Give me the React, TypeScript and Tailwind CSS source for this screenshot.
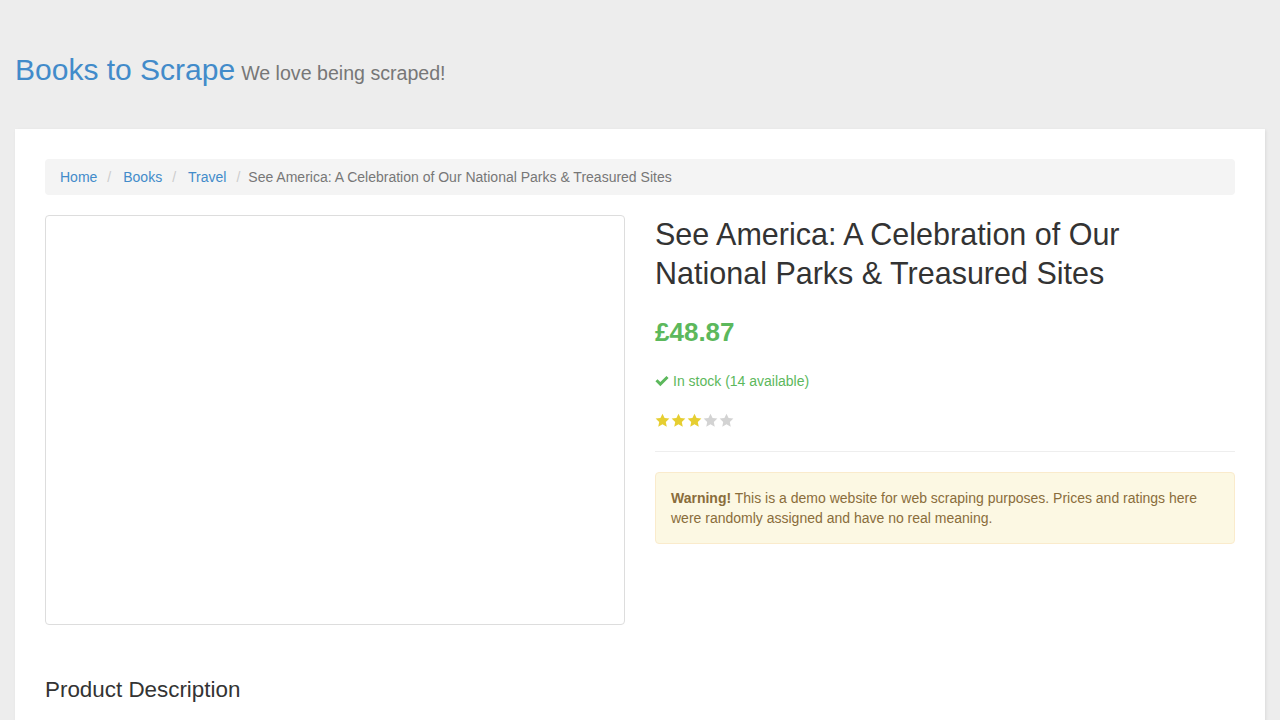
function Star({ on }: { on: boolean }) {
  return (
    <svg viewBox="0 0 24 24" className={`w-[15px] h-[15px] mr-[1px] ${on ? "fill-[#e6ce31]" : "fill-[#d3d3d3]"}`}>
      <path d="M12 1l3.3 7 7.7.9-5.7 5.3 1.5 7.6L12 18l-6.8 3.8 1.5-7.6L1 8.9l7.7-.9z" />
    </svg>
  );
}

function Sep({ last }: { last?: boolean }) {
  return <li className={`pl-[10px] text-[#ccc] ${last ? "pr-[8px]" : "pr-[12px]"}`}>/</li>;
}

export default function App() {
  const rating = 3;
  return (
    <div className="min-h-screen bg-[#ededed] font-['Liberation_Sans',Arial,sans-serif] text-[14px] leading-[20px] text-[#333]">
      {/* header */}
      <header className="px-[15px] pt-[50px] pb-[40px]">
        <div className="flex items-baseline">
          <a className="text-[30px] leading-[39px] text-[#428bca]">Books to Scrape</a>
          <span className="ml-[6px] text-[19.6px] text-[#777]">We love being scraped!</span>
        </div>
      </header>

      {/* page */}
      <div className="mx-[15px] bg-white p-[30px] shadow-[1px_1px_3px_rgba(0,0,0,0.08)]">
        <ul className="flex items-center rounded-[4px] bg-[#f4f4f4] px-[15px] py-[8px]">
          <li><a className="text-[#428bca]">Home</a></li>
          <Sep />
          <li><a className="text-[#428bca]">Books</a></li>
          <Sep />
          <li><a className="text-[#428bca]">Travel</a></li>
          <Sep last />
          <li className="text-[#777]">See America: A Celebration of Our National Parks &amp; Treasured Sites</li>
        </ul>

        <div className="mt-[20px] grid grid-cols-2 gap-[30px]">
          <div className="h-[410px] rounded-[4px] border border-[#ddd]" />

          <div>
            <h1 className="pr-[10px] text-[30.5px] leading-[39px] text-[#333]">
              See America: A Celebration of Our National Parks &amp; Treasured Sites
            </h1>
            <p className="mt-[21px] text-[26px] leading-[36px] font-bold text-[#5cb85c]">£48.87</p>
            <p className="mt-[21px] flex items-center text-[#5cb85c]">
              <svg viewBox="0 0 16 16" className="w-[14px] h-[14px] mr-[4px] fill-[#5cb85c]">
                <path d="M0.5 8.4l2.4-2.4 3.2 3.2L13.1 2.2l2.4 2.4L6.1 14z" />
              </svg>
              In stock (14 available)
            </p>
            <div className="mt-[22px] flex items-center">
              {[0, 1, 2, 3, 4].map((i) => (
                <Star key={i} on={i < rating} />
              ))}
            </div>
            <hr className="mt-[23px] border-t border-[#eee]" />
            <div className="mt-[20px] rounded-[4px] border border-[#faebcc] bg-[#fcf8e3] p-[15px] text-[#8a6d3b]">
              <strong>Warning!</strong> This is a demo website for web scraping purposes. Prices and ratings here were
              randomly assigned and have no real meaning.
            </div>
          </div>
        </div>

        <h2 className="mt-[50px] text-[22.4px] leading-[30px] text-[#333]">Product Description</h2>
        <div className="h-[60px]" />
      </div>
    </div>
  );
}
